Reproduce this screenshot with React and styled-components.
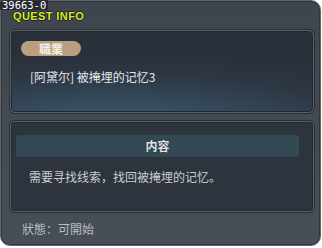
import React from "react";
import styled, { createGlobalStyle } from "styled-components";

const Global = createGlobalStyle`
  html, body { margin: 0; padding: 0; background: #ffffff; }
  body { font-family: "Noto Sans CJK SC", "Noto Sans", sans-serif; }
`;

const Frame = styled.div`
  position: relative;
  box-sizing: border-box;
  width: 321px;
  height: 246px;
  border: 1px solid #5e666e;
  border-radius: 3px 10px 10px 10px;
  background: linear-gradient(180deg, #3f454d 0%, #444b53 60%, #474e56 100%);
  box-shadow: inset 0 0 0 1px #30363c;
  padding: 0 7px 0 9px;
  display: flex;
  flex-direction: column;
`;

const IdTag = styled.div`
  position: absolute;
  left: -1px;
  top: -1px;
  padding: 0 2px;
  height: 10px;
  line-height: 11px;
  font-family: "DejaVu Sans Mono", monospace;
  font-size: 10.5px;
  color: #ffffff;
  background: rgba(30, 34, 40, 0.75);
  overflow: visible;
`;

const Title = styled.div`
  height: 29px;
  box-sizing: border-box;
  padding: 10px 0 0 3px;
  font-family: "Liberation Sans", Arial, sans-serif;
  font-weight: bold;
  font-size: 11px;
  letter-spacing: 0.4px;
  line-height: 10px;
  color: #d6ea2a;
  text-shadow: 1px 0 0 #1e2326, -1px 0 0 #1e2326, 0 1px 0 #1e2326, 0 -1px 0 #1e2326;
`;

const Panel = styled.div`
  box-sizing: border-box;
  width: 304px;
  height: ${(p) => p.$h}px;
  border: 1px solid #58606b;
  border-radius: 5px;
  box-shadow: 0 0 0 1px #2a2f36, inset 0 0 0 1px #232830;
  background: ${(p) =>
    p.$glow
      ? "radial-gradient(ellipse 120% 90% at 35% 115%, #3d5d6c 0%, #34495a 35%, #2d3642 70%, #2a303a 100%)"
      : "#2e343d"};
  margin-bottom: 8px;
  display: flex;
  flex-direction: column;
`;

const Pill = styled.div`
  margin: 10px 0 0 10px;
  width: 60px;
  height: 15px;
  border-radius: 8px;
  background: #b99f7f;
  color: #f4efe6;
  font-size: 12px;
  font-weight: bold;
  line-height: 15px;
  text-align: center;
`;

const QuestName = styled.div`
  margin: 13px 0 0 19px;
  font-size: 12px;
  line-height: 16px;
  color: #e4e7ea;
`;

const HeaderBar = styled.div`
  margin: 13px 14px 0 5px;
  height: 22px;
  border-radius: 3px;
  background: #334a56;
  color: #e2e6ea;
  font-size: 12px;
  font-weight: bold;
  line-height: 22px;
  text-align: center;
  text-shadow: 0 0 1px #10161a;
`;

const Body = styled.div`
  margin: 12px 0 0 18px;
  font-size: 12px;
  line-height: 16px;
  color: #c9cdd1;
`;

const Status = styled.div`
  margin: 1px 0 0 12px;
  font-size: 12px;
  line-height: 16px;
  color: #b9bec3;
`;

export default function App() {
  return (
    <>
      <Global />
      <Frame>
        <IdTag>39663-0</IdTag>
        <Title>QUEST INFO</Title>
        <Panel $h={83} $glow>
          <Pill>職業</Pill>
          <QuestName>[阿黛尔] 被掩埋的记忆3</QuestName>
        </Panel>
        <Panel $h={91}>
          <HeaderBar>内容</HeaderBar>
          <Body>需要寻找线索，找回被掩埋的记忆。</Body>
        </Panel>
        <Status>狀態：可開始</Status>
      </Frame>
    </>
  );
}
